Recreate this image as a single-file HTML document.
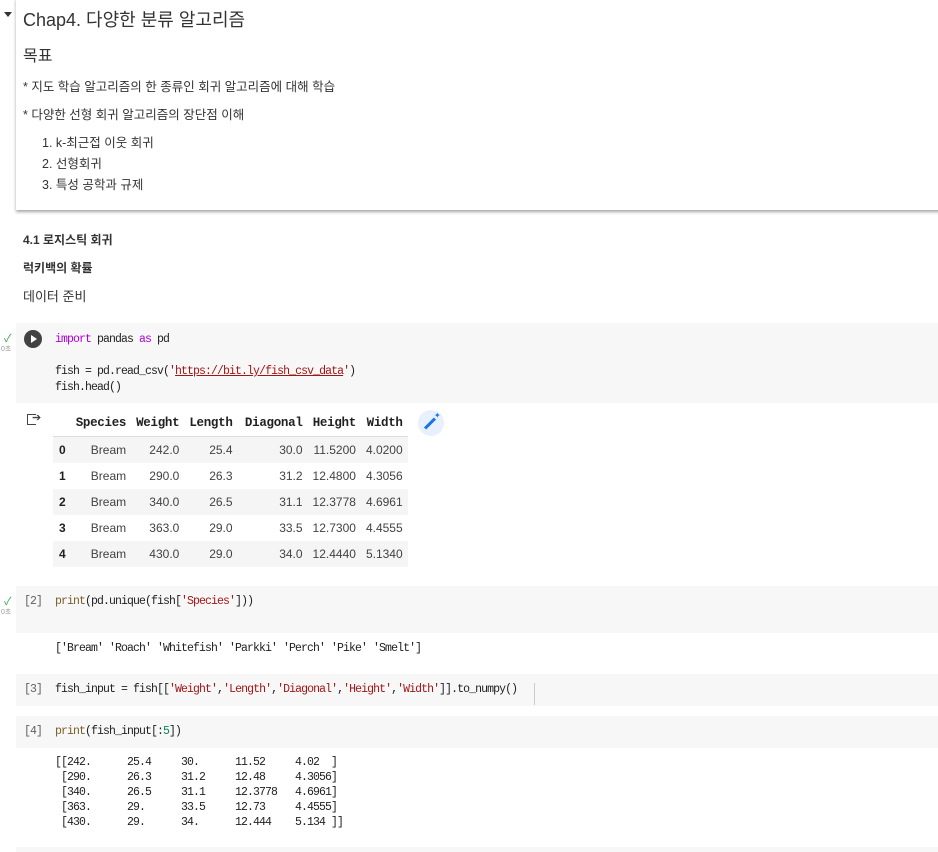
<!DOCTYPE html>
<html><head><meta charset="utf-8"><style>
body{margin:0;width:938px;height:852px;background:#fff;position:relative;overflow:hidden;font-family:"Liberation Sans","Noto Sans CJK KR",sans-serif;color:#333}
.a{position:absolute;white-space:pre}
.card{position:absolute;left:16px;top:-2px;width:930px;height:212px;background:#fff;box-shadow:0 2px 3px rgba(0,0,0,.35)}
.cell{position:absolute;left:16px;width:922px;background:#f7f7f7}
.m{font-family:"Liberation Mono","Noto Sans CJK KR",monospace;font-size:11.5px;letter-spacing:-0.9px;color:#212121}
.kw{color:#af00db}.s{color:#a31515}.f{color:#795e26}.n{color:#098658}
.g{color:#616161}
table{border-collapse:collapse;font-size:12px;position:absolute;left:53px;top:410px}
th{font-family:"Liberation Mono",monospace;font-weight:bold;font-size:12.5px;color:#212121;height:26px;padding:0 5px;text-align:right;border-bottom:1px solid #ddd;letter-spacing:-0.3px}
td{height:26px;padding:0 5px;text-align:right;color:#424242}
td:first-child{text-align:left;font-weight:bold;padding-left:6px;color:#212121}
tr.z td{background:#f5f5f5}
</style></head><body>
<div class="card"></div>
<div class="a" style="left:4px;top:12px;width:0;height:0;border-left:4px solid transparent;border-right:4px solid transparent;border-top:5px solid #333"></div>
<div class="a" style="left:23px;top:6px;font-size:18px">Chap4. 다양한 분류 알고리즘</div>
<div class="a" style="left:23px;top:42px;font-size:16px">목표</div>
<div class="a" style="left:23px;top:76px;font-size:12.5px">* 지도 학습 알고리즘의 한 종류인 회귀 알고리즘에 대해 학습</div>
<div class="a" style="left:23px;top:104px;font-size:12.5px">* 다양한 선형 회귀 알고리즘의 장단점 이해</div>
<div class="a" style="left:42px;top:132px;font-size:12.5px">1. k-최근접 이웃 회귀</div>
<div class="a" style="left:42px;top:153px;font-size:12.5px">2. 선형회귀</div>
<div class="a" style="left:42px;top:174px;font-size:12.5px">3. 특성 공학과 규제</div>
<div class="a" style="left:23px;top:231px;font-size:12px;font-weight:bold">4.1 로지스틱 회귀</div>
<div class="a" style="left:23px;top:259px;font-size:12px;font-weight:bold">럭키백의 확률</div>
<div class="a" style="left:23px;top:286px;font-size:13px">데이터 준비</div>

<div class="cell" style="top:323px;height:80px"></div>
<div class="a" style="left:4px;top:330px;color:#34a853;font-size:11px">✓</div>
<div class="a" style="left:1px;top:344px;color:#999;font-size:7px">0초</div>
<div class="a" style="left:24px;top:330px;width:18px;height:18px;border-radius:50%;background:#424242"></div>
<div class="a" style="left:31px;top:335px;width:0;height:0;border-top:4px solid transparent;border-bottom:4px solid transparent;border-left:6px solid #fff"></div>
<div class="a m" style="left:55px;top:333px"><span class="kw">import</span> pandas <span class="kw">as</span> pd</div>
<div class="a m" style="left:55px;top:365px">fish = pd.read_csv(<span class="s">'<u>https://bit.ly/fish_csv_data</u>'</span>)</div>
<div class="a m" style="left:55px;top:381px">fish.head()</div>

<div class="a" style="left:27px;top:414px;width:8px;height:9px;border:1.5px solid #444;border-right:none"></div>
<div class="a" style="left:32px;top:411px;font-size:11px;color:#444">➔</div>
<table>
<tr><th></th><th>Species</th><th>Weight</th><th>Length</th><th>Diagonal</th><th>Height</th><th>Width</th></tr>
<tr class="z"><td>0</td><td>Bream</td><td>242.0</td><td>25.4</td><td style="width:60px">30.0</td><td>11.5200</td><td>4.0200</td></tr>
<tr><td>1</td><td>Bream</td><td>290.0</td><td>26.3</td><td>31.2</td><td>12.4800</td><td>4.3056</td></tr>
<tr class="z"><td>2</td><td>Bream</td><td>340.0</td><td>26.5</td><td>31.1</td><td>12.3778</td><td>4.6961</td></tr>
<tr><td>3</td><td>Bream</td><td>363.0</td><td>29.0</td><td>33.5</td><td>12.7300</td><td>4.4555</td></tr>
<tr class="z"><td>4</td><td>Bream</td><td>430.0</td><td>29.0</td><td>34.0</td><td>12.4440</td><td>5.1340</td></tr>
</table>
<div class="a" style="left:418px;top:410px;width:26px;height:26px;border-radius:50%;background:#e8f0fe"></div>
<div class="a" style="left:423px;top:422px;width:14px;height:3px;background:#1a73e8;transform:rotate(-45deg)"></div>
<div class="a" style="left:434px;top:411px;font-size:8px;color:#1a73e8">✦</div>

<div class="cell" style="top:586px;height:47px"></div>
<div class="a" style="left:4px;top:593px;color:#34a853;font-size:11px">✓</div>
<div class="a" style="left:1px;top:607px;color:#999;font-size:7px">0초</div>
<div class="a m g" style="left:24px;top:595px">[2]</div>
<div class="a m" style="left:55px;top:595px"><span class="f">print</span>(pd.unique(fish[<span class="s">'Species'</span>]))</div>
<div class="a m" style="left:55px;top:642px">['Bream' 'Roach' 'Whitefish' 'Parkki' 'Perch' 'Pike' 'Smelt']</div>

<div class="cell" style="top:674px;height:32px"></div>
<div class="a m g" style="left:24px;top:683px">[3]</div>
<div class="a m" style="left:55px;top:683px">fish_input = fish[[<span class="s">'Weight'</span>,<span class="s">'Length'</span>,<span class="s">'Diagonal'</span>,<span class="s">'Height'</span>,<span class="s">'Width'</span>]].to_numpy()</div>
<div class="a" style="left:534px;top:683px;width:1px;height:22px;background:#ccc"></div>

<div class="cell" style="top:716px;height:32px"></div>
<div class="a m g" style="left:24px;top:725px">[4]</div>
<div class="a m" style="left:55px;top:725px"><span class="f">print</span>(fish_input[:<span class="n">5</span>])</div>
<div class="a m" style="left:55px;top:755px;line-height:15px">[[242.      25.4     30.      11.52     4.02  ]
 [290.      26.3     31.2     12.48     4.3056]
 [340.      26.5     31.1     12.3778   4.6961]
 [363.      29.      33.5     12.73     4.4555]
 [430.      29.      34.      12.444    5.134 ]]</div>
<div class="cell" style="top:847px;height:5px"></div>
</body></html>
